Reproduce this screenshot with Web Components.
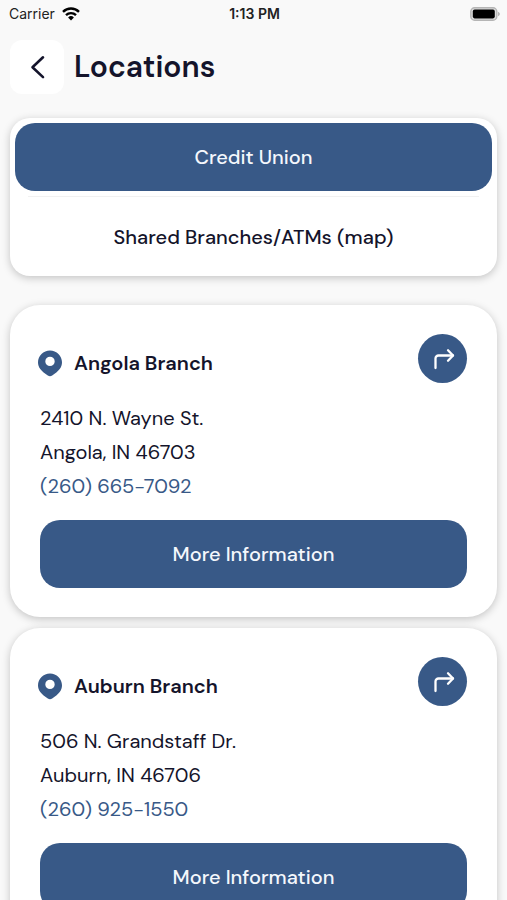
<!DOCTYPE html>
<html lang="en">
<head>
<meta charset="utf-8">
<meta name="viewport" content="width=device-width, initial-scale=1">
<title>Locations</title>
<style>
    :root {
        --color-primary: #385987;
        --color-text: #14142b;
        --color-page: #f9f9f9;
        --shadow: 0 2px 8px rgba(0, 0, 0, 0.22);
    }

    body {
        margin: 0;
        background: var(--color-page);
        color: var(--color-text);
        font-family: "DM Sans", Inter, sans-serif;
        font-size: 20px;
    }
</style>
</head>
<body>
<app-screen>
    <status-bar slot="status" carrier="Carrier" time="1:13 PM"></status-bar>
    <page-header slot="header">Locations</page-header>
    <tab-switch>
        <app-button>Credit Union</app-button>
        <app-button plain>Shared Branches/ATMs (map)</app-button>
    </tab-switch>
    <branch-list>
        <branch-card name="Angola Branch" street="2410 N. Wayne St." city="Angola, IN 46703" phone="(260) 665-7092"></branch-card>
        <branch-card name="Auburn Branch" street="506 N. Grandstaff Dr." city="Auburn, IN 46706" phone="(260) 925-1550"></branch-card>
    </branch-list>
</app-screen>

<script>
class AppScreen extends HTMLElement {
    constructor() {
        super();
        this.attachShadow({ mode: 'open' });
        this.shadowRoot.innerHTML = `
        <style>
            :host {
                display: flex;
                flex-direction: column;
                height: 100vh;
                overflow: hidden;
            }

            main {
                flex: 1;
                display: flex;
                flex-direction: column;
                gap: 29px;
                min-height: 0;
                padding: 24px 10px;
                overflow-y: auto;
                scrollbar-width: none;
            }
        </style>
        <slot name="status"></slot>
        <slot name="header"></slot>
        <main><slot></slot></main>`;
    }
}
customElements.define('app-screen', AppScreen);

class StatusBar extends HTMLElement {
    constructor() {
        super();
        this.attachShadow({ mode: 'open' });
        this.shadowRoot.innerHTML = `
        <style>
            :host {
                display: grid;
                grid-template-columns: 1fr auto 1fr;
                align-items: center;
                padding: 4px 7px 0 9px;
                font: 14px/20px Inter, sans-serif;
                color: #222;
            }

            .carrier {
                display: flex;
                align-items: center;
                gap: 7px;
            }

            .time {
                font-weight: 600;
            }

            .battery {
                justify-self: end;
            }

            svg {
                display: block;
            }
        </style>
        <div class="carrier">
            <span id="carrier"></span>
            <svg width="18" height="14" viewBox="0 0 18 14" fill="none" stroke="#000" stroke-width="2.4">
                <path d="M1 4.800a11.400 11.400 0 0 1 16 0"/>
                <path d="M4 8.100a7.200 7.200 0 0 1 10 0"/>
                <path d="M9 13.400l-2.900-3a4.200 4.200 0 0 1 5.800 0z" fill="#000" stroke="none"/>
            </svg>
        </div>
        <span class="time" id="time"></span>
        <svg class="battery" width="30" height="14" viewBox="0 0 30 14">
            <rect x="0.8" y="0.8" width="26" height="12.4" rx="3.8" fill="#ddd" stroke="#b5b5b5" stroke-width="1.4"/>
            <rect x="2.8" y="2.6" width="22" height="8.8" rx="1.8" fill="#000"/>
            <path d="M28 4.8c2.4.8 2.4 3.6 0 4.4z" fill="#b5b5b5"/>
        </svg>`;
    }

    connectedCallback() {
        this.shadowRoot.querySelector('#carrier').textContent = this.getAttribute('carrier');
        this.shadowRoot.querySelector('#time').textContent = this.getAttribute('time');
    }
}
customElements.define('status-bar', StatusBar);

class PageHeader extends HTMLElement {
    constructor() {
        super();
        this.attachShadow({ mode: 'open' });
        this.shadowRoot.innerHTML = `
        <style>
            :host {
                display: flex;
                align-items: center;
                gap: 10px;
                padding: 16px 10px 0;
            }

            button {
                display: grid;
                place-items: center;
                width: 54px;
                height: 54px;
                padding: 0;
                border: 0;
                border-radius: 12px;
                background: #fff;
                color: inherit;
            }

            h1 {
                margin: 0;
                font-size: 30px;
                line-height: 36px;
                font-weight: 600;
            }
        </style>
        <button type="button" aria-label="Back">
            <svg width="24" height="24" viewBox="0 0 24 24" fill="none" stroke="currentColor" stroke-width="2.6" stroke-linecap="round" stroke-linejoin="round">
                <path d="M18 2.300L7.500 12.200 18 22.100"/>
            </svg>
        </button>
        <h1><slot></slot></h1>`;
    }
}
customElements.define('page-header', PageHeader);

class AppButton extends HTMLElement {
    constructor() {
        super();
        this.attachShadow({ mode: 'open' });
        this.shadowRoot.innerHTML = `
        <style>
            :host {
                display: block;
            }

            button {
                display: block;
                width: 100%;
                padding: 22px 16px;
                border: 0;
                border-radius: 20px;
                background: var(--color-primary);
                color: #f4f7fc;
                font: inherit;
                font-weight: 500;
                line-height: 24px;
            }

            :host([plain]) button {
                background: transparent;
                color: var(--color-text);
            }
        </style>
        <button type="button"><slot></slot></button>`;
    }
}
customElements.define('app-button', AppButton);

class TabSwitch extends HTMLElement {
    constructor() {
        super();
        this.attachShadow({ mode: 'open' });
        this.shadowRoot.innerHTML = `
        <style>
            :host {
                display: block;
                padding: 5px;
                border-radius: 20px;
                background: #fff;
                box-shadow: var(--shadow);
            }

            /* thin rule between the two tabs */
            ::slotted([plain]) {
                margin-top: 5px;
                padding-top: 7px;
                background: linear-gradient(#f1f1f1, #f1f1f1) center top / calc(100% - 26px) 1px no-repeat;
            }
        </style>
        <slot></slot>`;
    }
}
customElements.define('tab-switch', TabSwitch);

class BranchList extends HTMLElement {
    constructor() {
        super();
        this.attachShadow({ mode: 'open' });
        this.shadowRoot.innerHTML = `
        <style>
            :host {
                display: flex;
                flex-direction: column;
                gap: 11px;
            }
        </style>
        <slot></slot>`;
    }
}
customElements.define('branch-list', BranchList);

class BranchCard extends HTMLElement {
    constructor() {
        super();
        this.attachShadow({ mode: 'open' });
        this.shadowRoot.innerHTML = `
        <style>
            :host {
                display: block;
                padding: 29px 28px;
                border-radius: 30px;
                background: #fff;
                box-shadow: var(--shadow);
            }

            header {
                display: flex;
                align-items: flex-end;
                gap: 12px;
                padding-right: 2px;
            }

            .pin {
                width: 24px;
                height: 40px;
            }

            h2 {
                flex: 1;
                margin: 0;
                font-size: 20px;
                line-height: 40px;
                font-weight: 600;
            }

            .route {
                display: grid;
                place-items: center;
                width: 49px;
                height: 49px;
                padding: 0;
                border: 0;
                border-radius: 50%;
                background: var(--color-primary);
                color: #fff;
            }

            .body {
                padding: 18px 2px 0;
            }

            address {
                margin-bottom: 17px;
                font-style: normal;
                line-height: 34px;
            }

            address > * {
                display: block;
            }

            a {
                color: var(--color-primary);
                text-decoration: none;
            }
        </style>
        <header>
            <svg class="pin" viewBox="0 0 24 40">
                <path fill="var(--color-primary)" fill-rule="evenodd" d="M12 7.500C5.400 7.500 0 12.800 0 19.300c0 5.200 2.800 8.400 9.800 13.300q2.200 1.500 4.400 0C21.200 27.700 24 24.500 24 19.300 24 12.800 18.600 7.500 12 7.500zM12 13.700a4.700 4.700 0 1 1 0 9.400 4.700 4.700 0 0 1 0-9.400z"/>
            </svg>
            <h2></h2>
            <button class="route" type="button" aria-label="Directions">
                <svg width="24" height="24" viewBox="0 0 24 24" fill="none" stroke="currentColor" stroke-width="2.3" stroke-linecap="round" stroke-linejoin="round">
                    <path d="M4.500 21V11.500a3 3 0 0 1 3-3h14.500"/>
                    <path d="M17 3.300l5 5.200-5 5.200"/>
                </svg>
            </button>
        </header>
        <div class="body">
            <address>
                <span class="street"></span>
                <span class="city"></span>
                <a class="phone"></a>
            </address>
            <app-button>More Information</app-button>
        </div>`;
    }

    connectedCallback() {
        const phone = this.getAttribute('phone');
        this.shadowRoot.querySelector('h2').textContent = this.getAttribute('name');
        this.shadowRoot.querySelector('.street').textContent = this.getAttribute('street');
        this.shadowRoot.querySelector('.city').textContent = this.getAttribute('city');
        this.shadowRoot.querySelector('.phone').textContent = phone;
        this.shadowRoot.querySelector('.phone').href = 'tel:' + phone.replace(/\D/g, '');
    }
}
customElements.define('branch-card', BranchCard);
</script>
</body>
</html>
